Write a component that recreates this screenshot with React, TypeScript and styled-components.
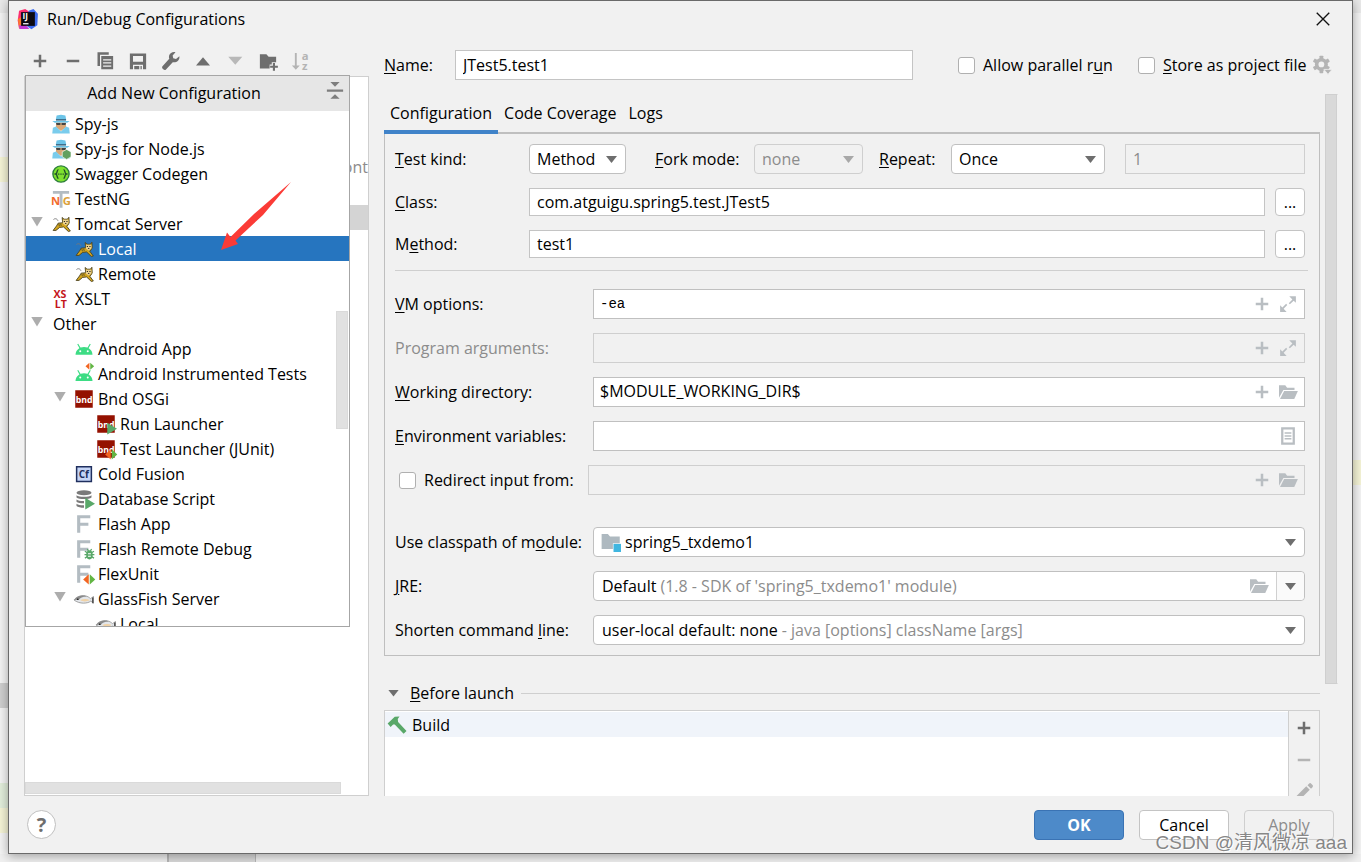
import React, { useState } from "react";
import styled, { createGlobalStyle, css } from "styled-components";

const GlobalStyle = createGlobalStyle`
  * { box-sizing: border-box; }
  body { margin: 0; background: #f0f0f0; }
  body, button, input, select {
    font-family: "Open Sans", "Noto Sans", "Noto Sans CJK SC", sans-serif;
    font-size: 16px;
    line-height: 24px;
    color: #000;
  }
  u { text-decoration-thickness: 1px; text-underline-offset: 2px; }
`;

/* ---------- editor behind the dialog ---------- */

const Desktop = styled.div`
  display: grid;
  grid-template-columns: 8px minmax(0, 1fr) 8px;
  grid-template-rows: minmax(0, 1fr) 8px;
  height: 100vh;
  min-height: 720px;
  overflow: hidden;
`;

const Gutter = styled.div`
  border-top: 13px solid #e9e9e9;
  background: #f4f4f4;
`;

const Mark = styled.div<{ $before: number; $color: string }>`
  height: 25px;
  margin-top: ${(p) => p.$before}px;
  background: ${(p) => p.$color};
`;

const StatusStrip = styled.div`
  grid-column: 1 / -1;
  padding-left: 167px;
  background: #f0f0f0;
`;

const StatusTab = styled.div`
  width: 89px;
  height: 8px;
  background: #dadada;
  border-left: 2px solid #b8b8b8;
  border-right: 1px solid #b8b8b8;
`;

/* ---------- dialog frame ---------- */

const Dialog = styled.main`
  position: relative;
  z-index: 1;
  display: flex;
  flex-direction: column;
  min-height: 0;
  background: #f1f1f1;
  border: 1px solid #6a6a6a;
  box-shadow: 0 2px 10px rgba(0, 0, 0, 0.35);
`;

const TitleBar = styled.header`
  display: flex;
  align-items: center;
  gap: 8px;
  height: 38px;
  padding: 0 19px 2px 8px;
`;

const Title = styled.h1`
  flex: 1;
  margin: 0;
  font-size: 16px;
  line-height: 24px;
  font-weight: 400;
`;

const IconButton = styled.button`
  display: grid;
  place-items: center;
  width: 20px;
  height: 20px;
  padding: 0;
  border: 0;
  background: none;
`;

const Body = styled.div`
  flex: 1;
  min-height: 0;
  display: grid;
  grid-template-columns: 345px minmax(0, 1fr);
  gap: 15px;
  padding: 0 14px 0 15px;
`;

/* ---------- left side ---------- */

const Side = styled.section`
  position: relative;
  display: flex;
  flex-direction: column;
  min-height: 0;
`;

const Toolbar = styled.div`
  display: flex;
  justify-content: space-between;
  width: 281px;
  height: 37px;
  margin-left: 6px;
  padding-top: 12px;
`;

const TreePane = styled.div`
  flex: 1;
  display: flex;
  flex-direction: column;
  justify-content: space-between;
  background: #fff;
  border: 1px solid #cfcfcf;
  padding-top: 3px;
`;

const PaneRows = styled.ul`
  margin: 0;
  padding: 0;
  list-style: none;
`;

const PaneRow = styled.li<{ $selected?: boolean }>`
  height: 25px;
  text-align: right;
  color: #8c8c8c;
  background: ${(p) => (p.$selected ? "#d4d4d4" : "transparent")};
`;

const HorizontalThumb = styled.div`
  width: 316px;
  height: 12px;
  margin-bottom: 1px;
  background: #e1e1e1;
  border: 1px solid #dadada;
`;

const Popup = styled.div`
  position: absolute;
  z-index: 2;
  top: 36px;
  left: 1px;
  width: 325px;
  height: 552px;
  display: flex;
  flex-direction: column;
  overflow: hidden;
  background: #fff;
  border: 1px solid #a6a6a6;
`;

const PopupHeader = styled.div`
  flex: none;
  display: flex;
  align-items: flex-start;
  gap: 3px;
  height: 35px;
  padding: 5px 4px 0 0;
  background: #e6e6e6;
`;

const PopupTitle = styled.h2`
  flex: 1;
  margin: 0;
  font-size: 16px;
  line-height: 24px;
  font-weight: 400;
  text-align: center;
`;

const Tree = styled.ul`
  margin: 0;
  padding: 0;
  list-style: none;
`;

const indents = [5, 28, 50];

const TreeRow = styled.li<{ $depth: number; $selected?: boolean }>`
  display: flex;
  align-items: center;
  height: 25px;
  padding-left: ${(p) => indents[p.$depth]}px;
  white-space: nowrap;
  ${(p) =>
    p.$selected &&
    css`
      background: #2675bf;
      color: #fff;
    `}
`;

const Twisty = styled.span<{ $open?: boolean }>`
  width: 12px;
  height: 10px;
  margin: 0 8px 4px 0;
  background: ${(p) => (p.$open ? "#adadad" : "none")};
  clip-path: polygon(0 0, 100% 0, 50% 100%);
`;

const TreeLabel = styled.span<{ $plain?: boolean }>`
  padding-left: ${(p) => (p.$plain ? 2 : 4)}px;
`;

const PopupThumb = styled.div`
  position: absolute;
  top: 235px;
  right: 1px;
  width: 12px;
  height: 118px;
  background: #e1e1e1;
  border: 1px solid #dadada;
`;

const Pointer = styled.svg`
  position: absolute;
  z-index: 3;
  top: 142px;
  left: 197px;
`;

/* ---------- right side ---------- */

const Editor = styled.section`
  display: flex;
  flex-direction: column;
  min-width: 0;
  min-height: 0;
`;

const NameRow = styled.div`
  display: flex;
  align-items: center;
  height: 30px;
  margin: 11px 6px 14px 0;
`;

const Label = styled.label<{ $width: number; $muted?: boolean }>`
  flex: none;
  width: ${(p) => p.$width}px;
  color: ${(p) => (p.$muted ? "#8c8c8c" : "#000")};
  white-space: nowrap;
`;

const TextInput = styled.input`
  flex: 1;
  min-width: 0;
  width: 100%;
  height: 100%;
  padding: 0 7px;
  border: 1px solid #c4c4c4;
  border-radius: 0;
  background: #fff;
  outline: none;
  &:disabled {
    background: #f1f1f1;
    border-color: #cfcfcf;
    color: #8c8c8c;
  }
`;

const CheckLabel = styled.label<{ $width: number }>`
  flex: none;
  display: flex;
  align-items: center;
  gap: 8px;
  width: ${(p) => p.$width}px;
  white-space: nowrap;
`;

const CheckBox = styled.input`
  appearance: none;
  flex: none;
  width: 17px;
  height: 17px;
  margin: 0;
  background: #fff;
  border: 1px solid #b0b0b0;
  border-radius: 3px;
  &:checked {
    background: #4d8ac9;
  }
`;

const Options = styled.div`
  display: flex;
  align-items: center;
  margin-left: 45px;
`;

const ScrollArea = styled.div`
  flex: 1;
  min-height: 0;
  display: flex;
  gap: 5px;
  overflow: hidden;
`;

const Content = styled.div`
  flex: 1;
  min-width: 0;
  display: flex;
  flex-direction: column;
`;

const VerticalThumb = styled.div`
  flex: none;
  width: 13px;
  height: 590px;
  background: #d9d9d9;
  border: 1px solid #cfcfcf;
  border-right-color: #f1f1f1;
  box-shadow: inset -1px 0 #d0d0d0;
`;

const Tabs = styled.div`
  flex: none;
  display: flex;
  height: 40px;
  border-bottom: 2px solid #bfbfbf;
`;

const Tab = styled.button<{ $active?: boolean }>`
  height: 40px;
  padding: 2px 6px 0;
  border: 0;
  border-bottom: 4px solid ${(p) => (p.$active ? "#4083c9" : "transparent")};
  background: none;
  white-space: nowrap;
`;

const Panel = styled.div`
  display: flex;
  flex-direction: column;
  gap: 14px;
  padding: 10px 14px 10px 10px;
  border: 1px solid #bfbfbf;
  border-top: 0;
`;

const Row = styled.div<{ $short?: boolean }>`
  display: flex;
  align-items: center;
  height: ${(p) => (p.$short ? 28 : 30)}px;
`;

const Separator = styled.hr`
  width: calc(100% + 3px);
  height: 1px;
  margin: -2px 0 4px;
  border: 0;
  background: #cfcfcf;
`;

const Spacer = styled.div`
  height: 4px;
`;

const BrowseButton = styled.button`
  flex: none;
  width: 30px;
  height: 100%;
  margin-left: 10px;
  padding: 0;
  line-height: 20px;
  border: 1px solid #c4c4c4;
  border-radius: 4px;
  background: #fff;
`;

const SelectBox = styled.span<{ $width?: number; $gap?: number; $off?: boolean }>`
  position: relative;
  display: flex;
  align-items: center;
  height: 100%;
  margin-right: ${(p) => p.$gap ?? 0}px;
  border: 1px solid ${(p) => (p.$off ? "#cfcfcf" : "#c0c0c0")};
  border-radius: 4px;
  background: ${(p) => (p.$off ? "#f1f1f1" : "#fff")};
  ${(p) => (p.$width ? `flex: none; width: ${p.$width}px;` : "flex: 1; min-width: 0;")}
  &::after {
    content: "";
    position: absolute;
    right: 8px;
    top: 11px;
    width: 11px;
    height: 7px;
    background: ${(p) => (p.$off ? "#a8a8a8" : "#6e6e6e")};
    clip-path: polygon(0 0, 100% 0, 50% 100%);
    pointer-events: none;
  }
`;

const NativeSelect = styled.select`
  appearance: none;
  width: 100%;
  height: 100%;
  padding: 0 24px 0 7px;
  border: 0;
  background: none;
  outline: none;
  opacity: 1;
  &:disabled {
    color: #8c8c8c;
  }
`;

const CoverSelect = styled(NativeSelect)`
  position: absolute;
  inset: 0;
  opacity: 0;
`;

const Value = styled.span`
  flex: 1;
  display: flex;
  align-items: center;
  gap: 4px;
  padding-left: 8px;
  white-space: nowrap;
`;

const ModuleValue = styled(Value)`
  padding-left: 7px;
`;

const Muted = styled.span`
  color: #8c8c8c;
`;

const DropSection = styled.span`
  align-self: stretch;
  width: 28px;
  margin-left: 7px;
  background: #fafafa;
  border-left: 1px solid #d0d0d0;
  border-radius: 0 4px 4px 0;
`;

const Field = styled.div<{ $off?: boolean }>`
  flex: 1;
  min-width: 0;
  height: 100%;
  display: flex;
  align-items: center;
  gap: 6px;
  padding-right: 6px;
  border: 1px solid ${(p) => (p.$off ? "#cfcfcf" : "#c0c0c0")};
  background: ${(p) => (p.$off ? "#f1f1f1" : "#fff")};
`;

const FieldInput = styled.input<{ $mono?: boolean }>`
  flex: 1;
  min-width: 0;
  height: 100%;
  padding: 0 6px 2px;
  border: 0;
  background: none;
  outline: none;
  ${(p) =>
    p.$mono &&
    css`
      padding-bottom: 0;
      font-family: "Liberation Mono", monospace;
      font-size: 14px;
    `}
`;

const RedirectCheck = styled(CheckLabel)`
  padding-left: 4px;
`;

const LaunchHeader = styled.div`
  flex: none;
  display: flex;
  align-items: center;
  height: 24px;
  margin: 25px 0 5px;
  padding-left: 4px;
`;

const LaunchTwisty = styled.span`
  width: 11px;
  height: 7px;
  margin-right: 11px;
  background: #6e6e6e;
  clip-path: polygon(0 0, 100% 0, 50% 100%);
`;

const LaunchTitle = styled.h2`
  margin: 0 7px 0 0;
  font-size: 16px;
  line-height: 24px;
  font-weight: 400;
`;

const LaunchRule = styled.span`
  flex: 1;
  height: 1px;
  background: #cfcfcf;
`;

const LaunchBox = styled.div`
  flex: 1 0 120px;
  display: flex;
  border: 1px solid #cfcfcf;
`;

const LaunchList = styled.ul`
  flex: 1;
  margin: 0;
  padding: 1px 0 0;
  list-style: none;
  background: #fff;
`;

const LaunchItem = styled.li`
  display: flex;
  align-items: center;
  gap: 5px;
  height: 25px;
  padding-left: 2px;
  background: #f0f4fa;
`;

const LaunchTools = styled.div`
  display: flex;
  flex-direction: column;
  align-items: center;
  gap: 12px;
  width: 31px;
  padding-top: 7px;
  border-left: 1px solid #cfcfcf;
`;

/* ---------- footer ---------- */

const Footer = styled.footer`
  flex: none;
  display: flex;
  align-items: center;
  gap: 15px;
  height: 57px;
  padding: 0 18px;
`;

const HelpButton = styled.button`
  width: 29px;
  height: 29px;
  margin-right: auto;
  padding: 0;
  border: 1px solid #c0c0c0;
  border-radius: 50%;
  background: #fff;
  color: #6e6e6e;
  font-size: 20px;
  font-weight: 700;
`;

const ActionButton = styled.button<{ $primary?: boolean }>`
  width: 90px;
  height: 30px;
  padding: 0;
  border: 1px solid #c4c4c4;
  border-radius: 4px;
  background: #fff;
  &:disabled {
    background: #f1f1f1;
    border-color: #cfcfcf;
    color: #8c8c8c;
  }
  ${(p) =>
    p.$primary &&
    css`
      background: #4d8ac9;
      border-color: #3a73b4;
      color: #fff;
      font-weight: 700;
    `}
`;

const Watermark = styled.div`
  position: absolute;
  z-index: 4;
  right: 5px;
  bottom: -2px;
  font-family: "Liberation Sans", "Noto Sans CJK SC", sans-serif;
  font-size: 19px;
  line-height: 24px;
  color: rgba(120, 120, 120, 0.9);
  text-shadow: 1px 1px 0 #fff;
  pointer-events: none;
`;

/* ---------- icons ---------- */

const IconSvg = styled.svg`
  flex: none;
  overflow: visible;
`;

const Svg = ({ children, size = 20 }: { children: React.ReactNode; size?: number }) => (
  <IconSvg width={size} height={size} viewBox="0 0 16 16" aria-hidden="true">
    {children}
  </IconSvg>
);

const GREY = "#6e6e6e";
const LIGHT = "#b9bec2";

const Plus = ({ c = GREY }: { c?: string }) => (
  <Svg><path d="M7 3h2v4h4v2H9v4H7V9H3V7h4z" fill={c} /></Svg>
);
const Minus = ({ c = GREY }: { c?: string }) => (
  <Svg><path d="M3 7h10v2H3z" fill={c} /></Svg>
);
const Copy = () => (
  <Svg>
    <path d="M2 1h9v2H4v9H2z" fill={GREY} />
    <path d="M5 4h9.500v10.500H5zM6.500 6.500v1H13v-1zm0 2.500v1H13V9zm0 2.500v1H13v-1z" fillRule="evenodd" fill={GREY} />
  </Svg>
);
const Save = () => (
  <Svg>
    <path d="M1.500 2h13v12.500H12V11H4v3.500H1.500zM4 4v4.500h8V4z" fillRule="evenodd" fill={GREY} />
    <path d="M5 12h4v2.500H5zM10 12h1v2.500h-1z" fill={GREY} />
  </Svg>
);
const Wrench = () => (
  <Svg>
    <path d="M14.700 4.100 12 6.300l-2.200-.6-.5-2.100L11.600 1C9.500.4 7.200 1.500 6.500 3.500c-.3.900-.2 1.800.1 2.600L1.200 12.200c-.5.6-.4 1.400.1 1.900l.8.700c.5.500 1.400.4 1.900-.1l5.400-5.800c2.400.8 5.900-1.300 5.300-4.800z" fill={GREY} />
  </Svg>
);
const Up = () => (
  <Svg><path d="M2.400 11.500 8 5l5.600 6.500z" fill={GREY} /></Svg>
);
const Down = () => (
  <Svg><path d="M1.800 4.500 7.400 11 13 4.500z" fill="#b8b8b8" /></Svg>
);
const FolderPlus = () => (
  <Svg>
    <path d="M1.500 2.500h5.200L8.500 4.500h6V9H11v1.800H9.300V14H1.500z" fill={GREY} />
    <path d="M11.900 9.500h1.700v2.200h2.300v1.700h-2.300v2.300h-1.700v-2.300H9.700v-1.700h2.200z" fill={GREY} />
  </Svg>
);
const SortAz = () => (
  <Svg>
    <path d="M3.100 1.500h1.500v10H7L3.850 15 .7 11.500h2.400z" fill="#b4b4b4" />
    <text x="8.500" y="7" fontSize="9" fontWeight="700" fill="#b4b4b4">a</text>
    <text x="8.700" y="15" fontSize="9" fontWeight="700" fill="#b4b4b4">z</text>
  </Svg>
);
const Collapse = () => (
  <Svg>
    <path d="M4.300.8h7.400L8 4.500zM1.500 6.800h13v1.800h-13zM4.300 14.200h7.400L8 10.500z" fill="#7d7d7d" />
  </Svg>
);
const Gear = () => (
  <Svg>
    <g fill="#b4b4b4">
      {[0, 60, 120].map((a) => (
        <rect key={a} x="6" y="0.500" width="3" height="14" rx="0.500" transform={`rotate(${a} 7.500 7.500)`} />
      ))}
      <circle cx="7.500" cy="7.500" r="5.200" />
    </g>
    <circle cx="7.500" cy="7.500" r="2.300" fill="#f1f1f1" />
    <path d="M9.500 11.500h6.500L12.800 15.500z" fill="#b4b4b4" stroke="#f1f1f1" strokeWidth=".6" />
  </Svg>
);
const Expand = () => (
  <Svg>
    <path d="M9 1.800h5.300V7l-1.800-1.700-3 2.900-.9-.9 2.900-3zM1.700 9l1.800 1.700 3-2.900.9.900-2.900 3L6.900 14.300H1.700z" fill={LIGHT} />
  </Svg>
);
const FolderOpen = () => (
  <Svg>
    <path d="M.8 2.500h5L7.300 4.500H13.200V6.300H4.300L.8 12.500z" fill={LIGHT} />
    <path d="M4.900 7.200h11L13 13.500H1.600z" fill={LIGHT} />
  </Svg>
);
const Page = () => (
  <Svg>
    <path d="M2.500 1h11v14h-11zM4.300 2.800v10.400h7.400V2.800z" fillRule="evenodd" fill={LIGHT} />
    <path d="M5.300 5h5.400v1.200H5.300zm0 2.300h5.400v1.200H5.300zm0 2.300h5.400v1.200H5.300z" fill={LIGHT} />
  </Svg>
);
const ModuleFolder = () => (
  <Svg>
    <path d="M.5 1.500h5l1.700 2H15V9H9.500v4.500H.5z" fill="#aeb9c0" />
    <path d="M10 9.500h6V16h-6z" fill="#40b6e0" />
  </Svg>
);
const Hammer = () => (
  <Svg>
    <path d="M.5 6.800 6.200 1.300 10 1.200 8.600 3.200 8.900 5.600 15.600 12.800 13.300 15 6.200 7.500 4.900 7.600 2.900 9.500z" fill="#59a869" />
  </Svg>
);
const Pencil = () => (
  <Svg>
    <path d="M1.500 14.500 2.200 11 9.800 3.400 12.600 6.200 5 13.800zM10.800 2.500 12 1.300c.6-.6 1.300-.5 1.800 0l1 1c.5.500.5 1.200 0 1.800l-1.200 1.200z" fill="#b4b4b4" />
  </Svg>
);
const Logo = () => (
  <Svg size={22}>
    <path d="M1.500 2 6 .8l4 2.700-6 11-2.500.5-1-6z" fill="#fc2d6f" />
    <path d="M.7 8 4 6l3 9-5.500-.5z" fill="#fb7a2a" />
    <path d="M8.500 2 12 .8l3.200 3.400-.4 8.300L10.500 15.500 7 13z" fill="#3d6cf0" />
    <path d="M1.500 12.500h5L9 15.300H2z" fill="#c33bd6" />
    <path d="M3 3h10v10H3z" fill="#0c0a12" />
    <path d="M4.400 11h4v.9h-4z" fill="#fff" />
    <text x="4" y="8.200" fontSize="6" fontWeight="700" fill="#fff">IJ</text>
  </Svg>
);

const RunBadge = () => <path d="M9 7 16.800 11.700 9 16.400z" fill="#59a869" />;
const TestBadge = () => (
  <>
    <path d="M11.800 8.200v8.200L7.300 12.300z" fill="#f26522" />
    <path d="M12.600 8.200v8.200l4.400-4.100z" fill="#62b543" />
  </>
);
const SpyShape = () => (
  <>
    <path d="M4.500 1.200 8 .6l3.500.6.7 3.300H3.800z" fill="#6cc4e8" />
    <path d="M4 4h8v1.300H4z" fill="#3e6f8c" />
    <path d="M1 5.500h14L13 7H3z" fill="#6cc4e8" />
    <path d="M4 7h8v3.500L8 13.500 4 10.500z" fill="#d9a877" />
    <path d="M4 7.200h3.500v1.600H4.500zm4.500 0H12l-.5 1.600h-3z" fill="#444" />
    <path d="M1.500 11 4 10l4 4 4-4 2.500 1 .5 4.500H1z" fill="#7accec" />
  </>
);
const Spy = () => <Svg><SpyShape /></Svg>;
const SpyNode = () => (
  <Svg>
    <SpyShape />
    <path d="M12.500 8.300 16 10.300v4L12.500 16.300 9 14.300v-4z" fill="#62a05f" stroke="#fff" strokeWidth=".5" />
  </Svg>
);
const Swagger = () => (
  <Svg>
    <circle cx="8" cy="8" r="6.500" fill="#7fe12f" stroke="#2d7f3c" strokeWidth="1.100" />
    <path d="M6 4.500C4.300 4.500 5.500 7.500 3.800 8 5.500 8.500 4.300 11.500 6 11.500M10 4.500c1.700 0 .5 3 2.200 3.500-1.700.5-.5 3.500-2.200 3.500" fill="none" stroke="#1f4d2b" strokeWidth="1.100" />
    <path d="M5.700 7.500h1v1h-1zm1.800 0h1v1h-1zm1.800 0h1v1h-1z" fill="#1f4d2b" />
  </Svg>
);
const TestNg = () => (
  <Svg>
    <path d="M1.500 1.500h13v2.300H9.200V15H6.900V3.800H1.500z" fill="#b3bcc2" />
    <text x="0" y="13" fontSize="9" fontWeight="700" fill="#f26b2d">N</text>
    <text x="9.300" y="13" fontSize="9" fontWeight="700" fill="#dba13a">G</text>
  </Svg>
);
const Tomcat = () => (
  <Svg>
    <g transform="translate(.8 1) scale(.9)">
      <path d="M1.300 3.800c1.500-1.400 3.500-.6 4 1.200" fill="none" stroke="#777" strokeWidth=".8" />
      <path d="M1 13.500 4 9.500 5.500 7l4-.3L9 2l1.700 1.500h3L15 1.800l.3 5-1.200 2-1 .9 3.200 4.300-1.800.4-4.200-4-3.500.4L3.500 13.500z" fill="#d2a41e" stroke="#4b431f" strokeWidth=".8" />
      <path d="M9.700 3.900h4.900v3.400l-2.400 1.700-2.500-1.500z" fill="#ead08d" />
      <path d="M10.500 5h1v1h-1zm2.300 0h1v1h-1zM11.700 6.900h1v.8h-1z" fill="#222" />
      <path d="M6 7.500l.6 2.300M7.700 7.500l.5 2" stroke="#4b431f" strokeWidth=".7" />
    </g>
  </Svg>
);
const Xslt = () => (
  <Svg>
    <text x="2" y="7.300" fontSize="8.500" fontWeight="700" fill="#c4161c">XS</text>
    <text x="3" y="15.300" fontSize="8.500" fontWeight="700" fill="#c4161c">LT</text>
  </Svg>
);
const AndroidShape = () => (
  <>
    <path d="M1.200 12.500c.2-3.700 3-6.200 6.800-6.200s6.600 2.500 6.800 6.200z" fill="#3ddc84" />
    <path d="M3 4l2 3.500M13 4l-2 3.500" stroke="#3ddc84" strokeWidth=".9" />
    <circle cx="5" cy="9.800" r=".8" fill="#fff" />
    <circle cx="11" cy="9.800" r=".8" fill="#fff" />
  </>
);
const Android = () => <Svg><AndroidShape /></Svg>;
const AndroidTest = () => (
  <Svg>
    <g transform="translate(0 1)"><AndroidShape /></g>
    <path d="M12.300-1v5.600L9.200 1.800z" fill="#f26522" />
    <path d="M13-1v5.600l3.100-2.800z" fill="#62b543" />
  </Svg>
);
const BndShape = () => (
  <>
    <path d="M1 1h14v14H1z" fill="#941100" />
    <text x="1.400" y="10.900" fontSize="7" fontWeight="700" fill="#fff">bnd</text>
  </>
);
const Bnd = () => <Svg><BndShape /></Svg>;
const BndRun = () => <Svg><BndShape /><RunBadge /></Svg>;
const BndTest = () => <Svg><BndShape /><TestBadge /></Svg>;
const ColdFusion = () => (
  <Svg>
    <path d="M2.100 2.100h11.800v11.800H2.100z" fill="#c5d5f7" stroke="#1f2f5e" strokeWidth="1.200" />
    <text x="3.800" y="11" fontSize="8" fontWeight="700" fill="#1f2f5e">Cf</text>
  </Svg>
);
const Database = () => (
  <Svg>
    <ellipse cx="8" cy="3" rx="6" ry="2" fill="#7a7a7a" />
    <path d="M2 5c2 1.700 10 1.700 12 0v1.800c-2 1.700-10 1.700-12 0zM2 8.300c1.500 1.200 4 1.400 6 1.300v1.800c-2.500 0-5-.3-6-1.300zM2 11.700c1.500 1.200 4 1.400 6 1.300v1.900c-2.500 0-5-.4-6-1.400z" fill="#7a7a7a" />
    <RunBadge />
  </Svg>
);
const FlashShape = () => <path d="M2.500 1H13v2.300H5V7h6.500v2.300H5V15H2.500z" fill="#b3bcc2" />;
const Flash = () => <Svg><FlashShape /></Svg>;
const FlashDebug = () => (
  <Svg>
    <FlashShape />
    <path d="M8.700 9.800l2 1.200M8.400 12.500h2M8.700 15.300l2-1.200M16 9.800l-2 1.200M16.300 12.500h-2M16 15.300l-2-1.200M10.600 8l1 1.500M14.100 8l-1 1.500" stroke="#59a869" strokeWidth="1" />
    <ellipse cx="12.350" cy="12.600" rx="2.600" ry="3.700" fill="#59a869" />
    <path d="M11.200 11.300h2.300v.9h-2.300zm0 2h2.300v.9h-2.300z" fill="#fff" />
  </Svg>
);
const FlexUnit = () => <Svg><FlashShape /><TestBadge /></Svg>;
const Fish = () => (
  <Svg>
    <path d="M0 8.800C2 6 5.500 5 9 5.500c2 .3 3.200 1.300 4.200 2.200L15.600 6v5.300L13.400 9.700C11 11.700 4.500 12.300 0 8.800z" fill="#e3e6ea" stroke="#8a8a8a" strokeWidth=".6" />
    <path d="M.3 8.600C2.500 5.600 6 4.800 9 5.400l1.500.7C7 6 5 7 3.800 8.800z" fill="#8a8a8a" />
    <path d="M14.400 6.800h1.200v4.500h-1.200z" fill="#555" />
    <path d="M5 8.800c2 1.600 5.500 1.500 7.500 0-2-.9-5-1-7.500 0z" fill="#f0d2a6" />
    <circle cx="3" cy="8.200" r=".6" fill="#111" />
  </Svg>
);

/* ---------- data ---------- */

type Node = { label: string; depth: number; icon?: React.FC; open?: boolean };

const nodes: Node[] = [
  { label: "Spy-js", depth: 0, icon: Spy },
  { label: "Spy-js for Node.js", depth: 0, icon: SpyNode },
  { label: "Swagger Codegen", depth: 0, icon: Swagger },
  { label: "TestNG", depth: 0, icon: TestNg },
  { label: "Tomcat Server", depth: 0, icon: Tomcat, open: true },
  { label: "Local", depth: 1, icon: Tomcat },
  { label: "Remote", depth: 1, icon: Tomcat },
  { label: "XSLT", depth: 0, icon: Xslt },
  { label: "Other", depth: 0, open: true },
  { label: "Android App", depth: 1, icon: Android },
  { label: "Android Instrumented Tests", depth: 1, icon: AndroidTest },
  { label: "Bnd OSGi", depth: 1, icon: Bnd, open: true },
  { label: "Run Launcher", depth: 2, icon: BndRun },
  { label: "Test Launcher (JUnit)", depth: 2, icon: BndTest },
  { label: "Cold Fusion", depth: 1, icon: ColdFusion },
  { label: "Database Script", depth: 1, icon: Database },
  { label: "Flash App", depth: 1, icon: Flash },
  { label: "Flash Remote Debug", depth: 1, icon: FlashDebug },
  { label: "FlexUnit", depth: 1, icon: FlexUnit },
  { label: "GlassFish Server", depth: 1, icon: Fish, open: true },
  { label: "Local", depth: 2, icon: Fish },
];

const tools: [string, React.FC][] = [
  ["Add", Plus],
  ["Remove", Minus],
  ["Copy", Copy],
  ["Save", Save],
  ["Edit templates", Wrench],
  ["Move up", Up],
  ["Move down", Down],
  ["New folder", FolderPlus],
  ["Sort", SortAz],
];

const tabs = ["Configuration", "Code Coverage", "Logs"];

/* ---------- page ---------- */

const SidePanel = () => {
  const [selected, setSelected] = useState(5);
  return (
    <Side>
      <Toolbar>
        {tools.map(([name, Icon]) => (
          <IconButton key={name} aria-label={name}><Icon /></IconButton>
        ))}
      </Toolbar>
      <TreePane>
        <PaneRows>
          <PaneRow />
          <PaneRow />
          <PaneRow />
          <PaneRow>ont</PaneRow>
          <PaneRow />
          <PaneRow $selected />
        </PaneRows>
        <HorizontalThumb />
      </TreePane>
      <Popup>
        <PopupHeader>
          <PopupTitle>Add New Configuration</PopupTitle>
          <IconButton aria-label="Collapse all"><Collapse /></IconButton>
        </PopupHeader>
        <Tree>
          {nodes.map(({ label, depth, icon: Icon, open }, i) => (
            <TreeRow key={i} $depth={depth} $selected={i === selected} onClick={() => setSelected(i)}>
              <Twisty $open={open} />
              {Icon && <Icon />}
              <TreeLabel $plain={!Icon}>{label}</TreeLabel>
            </TreeRow>
          ))}
        </Tree>
        <PopupThumb />
      </Popup>
      <Pointer width="72" height="72" viewBox="0 0 72 72" aria-hidden="true">
        <path d="M0 69 6 51.500 9.500 56 33 33 70 1 42 34 14.500 59.500 17 63z" fill="#fb3b36" />
      </Pointer>
    </Side>
  );
};

const ConfigurationForm = () => (
  <Panel>
    <Row>
      <Label $width={134} htmlFor="kind"><u>T</u>est kind:</Label>
      <SelectBox $width={97} $gap={29}>
        <NativeSelect id="kind"><option>Method</option></NativeSelect>
      </SelectBox>
      <Label $width={99} htmlFor="fork"><u>F</u>ork mode:</Label>
      <SelectBox $width={109} $gap={16} $off>
        <NativeSelect id="fork" disabled><option>none</option></NativeSelect>
      </SelectBox>
      <Label $width={72} htmlFor="repeat"><u>R</u>epeat:</Label>
      <SelectBox $width={154} $gap={20}>
        <NativeSelect id="repeat"><option>Once</option></NativeSelect>
      </SelectBox>
      <TextInput aria-label="Repeat count" defaultValue="1" disabled />
    </Row>
    <Row $short>
      <Label $width={134} htmlFor="class"><u>C</u>lass:</Label>
      <TextInput id="class" defaultValue="com.atguigu.spring5.test.JTest5" />
      <BrowseButton>...</BrowseButton>
    </Row>
    <Row $short>
      <Label $width={134} htmlFor="method">M<u>e</u>thod:</Label>
      <TextInput id="method" defaultValue="test1" />
      <BrowseButton>...</BrowseButton>
    </Row>
    <Separator />
    <Row>
      <Label $width={198} htmlFor="vm"><u>V</u>M options:</Label>
      <Field>
        <FieldInput id="vm" $mono defaultValue="-ea" />
        <IconButton aria-label="Insert macro"><Plus c={LIGHT} /></IconButton>
        <IconButton aria-label="Expand"><Expand /></IconButton>
      </Field>
    </Row>
    <Row>
      <Label $width={198} $muted htmlFor="args">Program arguments:</Label>
      <Field $off>
        <FieldInput id="args" disabled />
        <IconButton aria-label="Insert macro" disabled><Plus c={LIGHT} /></IconButton>
        <IconButton aria-label="Expand" disabled><Expand /></IconButton>
      </Field>
    </Row>
    <Row>
      <Label $width={198} htmlFor="dir"><u>W</u>orking directory:</Label>
      <Field>
        <FieldInput id="dir" defaultValue="$MODULE_WORKING_DIR$" />
        <IconButton aria-label="Insert macro"><Plus c={LIGHT} /></IconButton>
        <IconButton aria-label="Browse"><FolderOpen /></IconButton>
      </Field>
    </Row>
    <Row>
      <Label $width={198} htmlFor="env"><u>E</u>nvironment variables:</Label>
      <Field>
        <FieldInput id="env" />
        <IconButton aria-label="Edit variables"><Page /></IconButton>
      </Field>
    </Row>
    <Row>
      <RedirectCheck $width={193}>
        <CheckBox type="checkbox" />
        Redirect input from:
      </RedirectCheck>
      <Field $off>
        <FieldInput aria-label="Input file" disabled />
        <IconButton aria-label="Insert macro" disabled><Plus c={LIGHT} /></IconButton>
        <IconButton aria-label="Browse" disabled><FolderOpen /></IconButton>
      </Field>
    </Row>
    <Spacer />
    <Row>
      <Label $width={198} htmlFor="module">Use classpath of m<u>o</u>dule:</Label>
      <SelectBox>
        <ModuleValue><ModuleFolder />spring5_txdemo1</ModuleValue>
        <CoverSelect id="module"><option>spring5_txdemo1</option></CoverSelect>
      </SelectBox>
    </Row>
    <Row>
      <Label $width={198} htmlFor="jre"><u>J</u>RE:</Label>
      <SelectBox>
        <Value>Default <Muted>(1.8 - SDK of 'spring5_txdemo1' module)</Muted></Value>
        <FolderOpen />
        <DropSection />
        <CoverSelect id="jre"><option>Default</option></CoverSelect>
      </SelectBox>
    </Row>
    <Row>
      <Label $width={198} htmlFor="shorten">Shorten command <u>l</u>ine:</Label>
      <SelectBox>
        <Value>user-local default: none <Muted>- java [options] className [args]</Muted></Value>
        <CoverSelect id="shorten"><option>user-local default: none</option></CoverSelect>
      </SelectBox>
    </Row>
  </Panel>
);

export default function App() {
  const [tab, setTab] = useState(tabs[0]);
  return (
    <>
      <GlobalStyle />
      <Desktop>
        <Gutter>
          <Mark $before={144} $color="#f5f4d6" />
          <Mark $before={501} $color="#cfcfcf" />
          <Mark $before={75} $color="#e2eedb" />
          <Mark $before={0} $color="#f5f4d6" />
        </Gutter>
        <Dialog>
          <TitleBar>
            <Logo />
            <Title>Run/Debug Configurations</Title>
            <IconButton aria-label="Close">
              <Svg><path d="M3 3l10 10M13 3 3 13" stroke="#111" strokeWidth="1.100" /></Svg>
            </IconButton>
          </TitleBar>
          <Body>
            <SidePanel />
            <Editor>
              <NameRow>
                <Label $width={71} htmlFor="name"><u>N</u>ame:</Label>
                <TextInput id="name" defaultValue="JTest5.test1" />
                <Options>
                  <CheckLabel $width={180}>
                    <CheckBox type="checkbox" />
                    <span>Allow parallel r<u>u</u>n</span>
                  </CheckLabel>
                  <CheckLabel $width={174}>
                    <CheckBox type="checkbox" />
                    <span><u>S</u>tore as project file</span>
                  </CheckLabel>
                  <IconButton aria-label="Storage settings"><Gear /></IconButton>
                </Options>
              </NameRow>
              <ScrollArea>
                <Content>
                  <Tabs>
                    {tabs.map((t) => (
                      <Tab key={t} $active={t === tab} onClick={() => setTab(t)}>{t}</Tab>
                    ))}
                  </Tabs>
                  <ConfigurationForm />
                  <LaunchHeader>
                    <LaunchTwisty />
                    <LaunchTitle><u>B</u>efore launch</LaunchTitle>
                    <LaunchRule />
                  </LaunchHeader>
                  <LaunchBox>
                    <LaunchList>
                      <LaunchItem><Hammer />Build</LaunchItem>
                    </LaunchList>
                    <LaunchTools>
                      <IconButton aria-label="Add task"><Plus /></IconButton>
                      <IconButton aria-label="Remove task" disabled><Minus c="#b4b4b4" /></IconButton>
                      <IconButton aria-label="Edit task" disabled><Pencil /></IconButton>
                    </LaunchTools>
                  </LaunchBox>
                </Content>
                <VerticalThumb />
              </ScrollArea>
            </Editor>
          </Body>
          <Footer>
            <HelpButton aria-label="Help">?</HelpButton>
            <ActionButton $primary>OK</ActionButton>
            <ActionButton>Cancel</ActionButton>
            <ActionButton disabled>Apply</ActionButton>
          </Footer>
          <Watermark>CSDN @清风微凉 aaa</Watermark>
        </Dialog>
        <Gutter>
          <Mark $before={447} $color="#f5f4d6" />
        </Gutter>
        <StatusStrip><StatusTab /></StatusStrip>
      </Desktop>
    </>
  );
}
